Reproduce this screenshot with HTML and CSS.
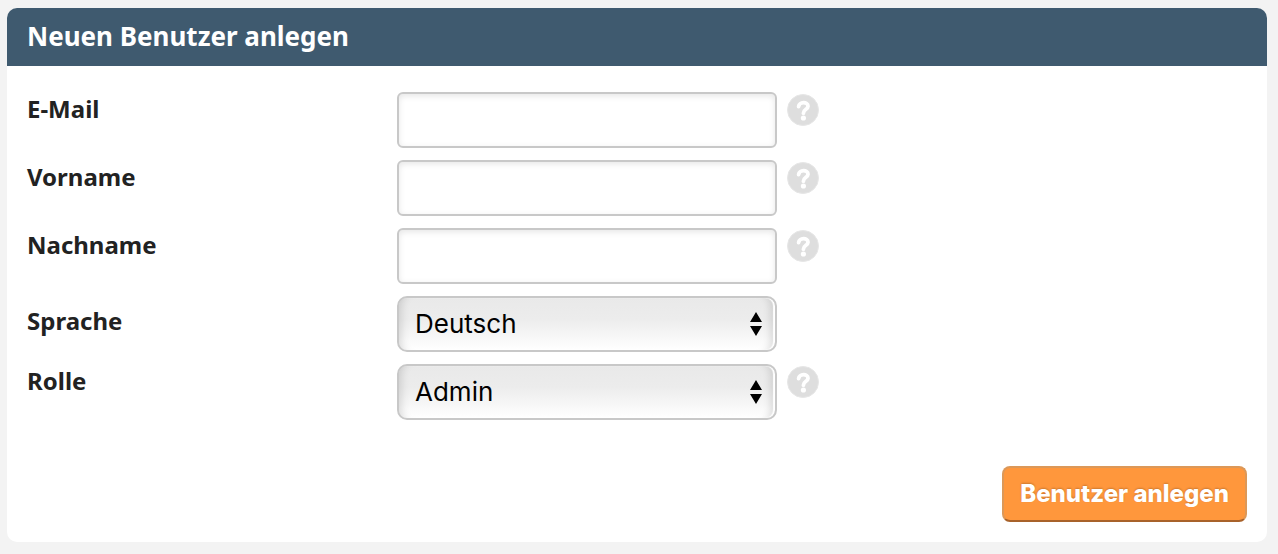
FILE: index.html
```html
<!DOCTYPE html>
<html lang="de">
<head>
    <meta charset="UTF-8">
    <title>Neuen Benutzer anlegen</title>
    <link rel="stylesheet" href="styles.css">
</head>
<body>
    <svg width="0" height="0" class="sprite" aria-hidden="true">
        <symbol id="help" viewBox="0 0 32 32">
            <circle cx="16" cy="16" r="15.5" fill="#dedede" stroke="#e6e6e6"/>
            <path d="M11.6 12.6C12 7.6 21 7.4 21 12.2C21 15.4 16.4 15.2 16.4 19.2" fill="none" stroke="#fff" stroke-width="3.8" stroke-linecap="round"/>
            <circle cx="16.4" cy="24" r="2.6" fill="#fff"/>
        </symbol>
        <symbol id="arrows" viewBox="0 0 12 24">
            <path d="M6 0L12 10H0zM6 24L0 14H12z"/>
        </symbol>
    </svg>

    <form class="panel">
        <h1 class="panel-title">Neuen Benutzer anlegen</h1>
        <div class="panel-body">
            <div class="row">
                <label for="email">E-Mail</label>
                <input type="email" id="email" class="field">
                <button type="button" class="help" aria-label="Hilfe"><svg><use href="#help"/></svg></button>
            </div>
            <div class="row">
                <label for="firstname">Vorname</label>
                <input type="text" id="firstname" class="field">
                <button type="button" class="help" aria-label="Hilfe"><svg><use href="#help"/></svg></button>
            </div>
            <div class="row">
                <label for="lastname">Nachname</label>
                <input type="text" id="lastname" class="field">
                <button type="button" class="help" aria-label="Hilfe"><svg><use href="#help"/></svg></button>
            </div>
            <div class="row row-plain">
                <label for="language">Sprache</label>
                <div class="select">
                    <select id="language" class="field">
                        <option>Deutsch</option>
                    </select>
                    <svg class="arrows"><use href="#arrows"/></svg>
                </div>
            </div>
            <div class="row">
                <label for="role">Rolle</label>
                <div class="select">
                    <select id="role" class="field">
                        <option>Admin</option>
                    </select>
                    <svg class="arrows"><use href="#arrows"/></svg>
                </div>
                <button type="button" class="help" aria-label="Hilfe"><svg><use href="#help"/></svg></button>
            </div>
            <div class="actions">
                <button type="submit" class="submit">Benutzer anlegen</button>
            </div>
        </div>
    </form>
</body>
</html>
```
FILE: styles.css
```css
* {
    box-sizing: border-box;
}
body {
    margin: 8px 11px 12px 7px;
    background: #f3f3f3;
    color: #222;
    font-family: "Noto Sans", "Open Sans", sans-serif;
}
.sprite {
    position: absolute;
}
.panel {
    background: #fff;
    border-radius: 10px;
    overflow: hidden;
}
.panel-title {
    margin: 0;
    padding: 0 20px 2px;
    background: #3f5a6f;
    color: #fff;
    font-size: 26px;
    line-height: 56px;
}
.panel-body {
    display: flex;
    flex-direction: column;
    gap: 12px;
    padding: 26px 20px 20px;
}
.row {
    display: grid;
    grid-template-columns: 360px minmax(0, 380px) 32px;
    column-gap: 10px;
    align-items: start;
}
label {
    font-size: 24px;
    font-weight: bold;
    line-height: 34px;
}
.row-plain label {
    padding-top: 8px;
}
.field {
    display: block;
    width: 100%;
    height: 56px;
    padding: 0 16px;
    border: 2px solid #c8c8c8;
    border-radius: 6px;
    background: #fff;
    box-shadow: inset 0 2px 6px rgba(0, 0, 0, 0.1);
    color: #000;
    font-family: Inter, Roboto, sans-serif;
    font-size: 26px;
}
.select {
    position: relative;
}
.select .field {
    appearance: none;
    padding-bottom: 2px;
    border-radius: 10px;
    background: linear-gradient(#e9e9e9, #ececec 40%, #fff);
    box-shadow: inset -2px 0 1px #fff, inset 10px 0 8px -8px rgba(0, 0, 0, 0.14), inset -12px 0 8px -8px rgba(0, 0, 0, 0.14);
}
.arrows {
    position: absolute;
    top: 16px;
    right: 15px;
    width: 12px;
    height: 24px;
    pointer-events: none;
}
.help {
    margin-top: 2px;
    padding: 0;
    border: none;
    background: none;
    cursor: pointer;
}
.help svg {
    display: block;
    width: 32px;
    height: 32px;
}
.actions {
    display: flex;
    justify-content: flex-end;
    margin-top: 34px;
}
.submit {
    height: 56px;
    padding: 0 16px 2px;
    border: 2px solid #dc9858;
    border-bottom-color: #a8622a;
    border-radius: 8px;
    background: #ff973c;
    color: #fff;
    font-family: Inter, Roboto, sans-serif;
    font-size: 24px;
    font-weight: 800;
    text-shadow: 0 -1px 2px rgba(0, 0, 0, 0.2);
    cursor: pointer;
}
```
